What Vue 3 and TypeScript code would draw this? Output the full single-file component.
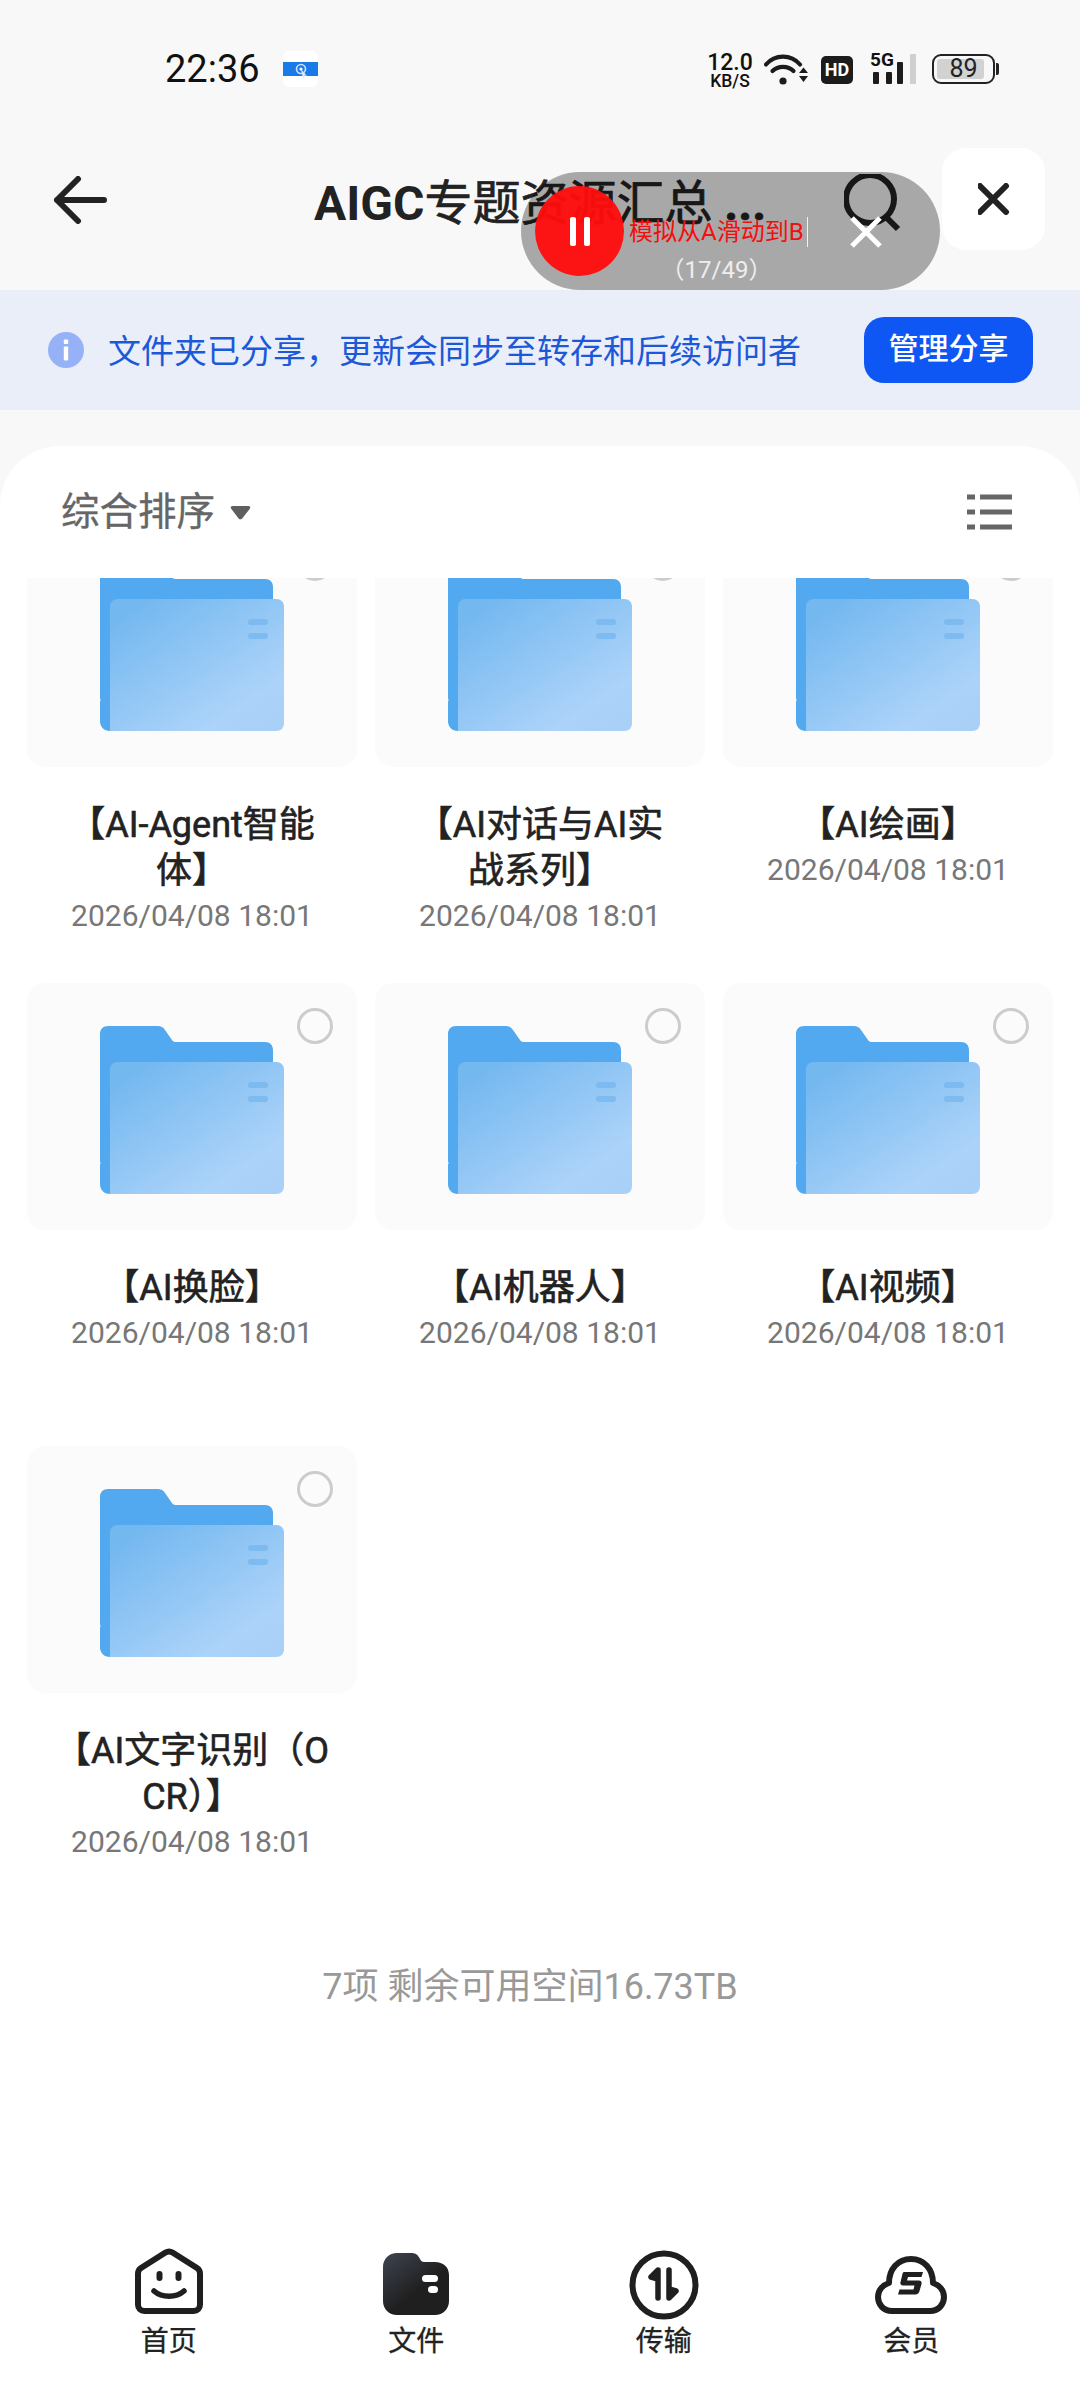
<script setup lang="ts">
interface Folder { name: string }
const folders: Folder[] = [
  { name: '【AI-Agent智能体】' },
  { name: '【AI对话与AI实战系列】' },
  { name: '【AI绘画】' },
  { name: '【AI换脸】' },
  { name: '【AI机器人】' },
  { name: '【AI视频】' },
  { name: '【AI文字识别（OCR）】' },
]
</script>

<template>
  <div class="page">
    <div class="status">
      <div class="status-left">
        <span class="time">22:36</span>
        <svg class="app-badge" width="35" height="36" viewBox="0 0 35 36">
          <rect width="35" height="36" rx="6" fill="#fff" />
          <rect y="11" width="35" height="14" fill="#1a7be8" />
          <circle cx="18" cy="18" r="4.5" fill="none" stroke="#cfe2fa" stroke-width="1.6" />
          <circle cx="18" cy="18" r="1.6" fill="#fff" />
          <path d="M18 18l6 7-2.6-.6L20 28z" fill="#dbe8fb" />
        </svg>
      </div>
      <div class="status-right">
        <div class="speed"><span class="speed-num">12.0</span><span class="speed-unit">KB/S</span></div>
        <svg class="wifi" width="44" height="32" viewBox="0 0 44 32">
          <path d="M2 11.5C11 1 27 1 36 11.5" fill="none" stroke="#1c1c1c" stroke-width="4.2" stroke-linecap="round" />
          <path d="M8.5 18C14 12.5 24 12.5 29.500 18" fill="none" stroke="#1c1c1c" stroke-width="4.2" stroke-linecap="round" />
          <circle cx="19" cy="28" r="3.6" fill="#1c1c1c" />
          <path d="M35 20h9l-4.5-5.5zM35 23h9l-4.5 6z" fill="#1c1c1c" />
        </svg>
        <span class="hd">HD</span>
        <div class="signal">
          <span class="five-g">5G</span>
          <svg class="bars" width="46" height="30" viewBox="0 0 46 30">
            <rect x="3" y="18" width="6" height="12" rx="1" fill="#1c1c1c" />
            <rect x="16" y="18" width="6" height="12" rx="1" fill="#1c1c1c" />
            <rect x="27" y="8" width="6" height="22" rx="1" fill="#1c1c1c" />
            <rect x="40" y="0" width="6" height="30" rx="1" fill="#cfcfcf" />
          </svg>
        </div>
        <div class="battery">
          <div class="battery-body"><span class="battery-fill"></span><span class="battery-num">89</span></div>
          <span class="battery-tip"></span>
        </div>
      </div>
    </div>

    <div class="header">
      <svg class="back" width="56" height="48" viewBox="0 0 56 48">
        <path d="M27 3L6 24l21 21M6 24h47" fill="none" stroke="#222" stroke-width="6" stroke-linecap="round" stroke-linejoin="round" />
      </svg>
      <div class="title"><span class="latin">AIGC</span>专题资源汇总 <b>...</b></div>
      <svg class="search" width="58" height="58" viewBox="0 0 58 58">
        <circle cx="26" cy="25" r="24" fill="none" stroke="#222" stroke-width="6" />
        <path d="M42 43l12 12" fill="none" stroke="#222" stroke-width="6" />
      </svg>
      <div class="close-box">
        <svg width="32" height="32" viewBox="0 0 32 32">
          <path d="M2 3l26 26M28 3L2 29" fill="none" stroke="#222" stroke-width="6" stroke-linecap="round" />
        </svg>
      </div>
    </div>

    <div class="banner">
      <svg class="info" width="36" height="36" viewBox="0 0 36 36">
        <circle cx="18" cy="18" r="18" fill="#96b1f6" />
        <rect x="15.8" y="7.5" width="4.4" height="4.6" rx="1" fill="#fff" />
        <rect x="15.8" y="14.5" width="4.4" height="14" rx="1" fill="#fff" />
      </svg>
      <span class="banner-text">文件夹已分享，更新会同步至转存和后续访问者</span>
      <span class="manage">管理分享</span>
    </div>

    <div class="sheet">
      <div class="sort">
        <span class="sort-label">综合排序</span>
        <svg class="caret" width="21" height="15" viewBox="0 0 21 15">
          <path d="M2.5 1h16c1.6 0 2.3 1.6 1.3 2.8l-7.6 9.6c-1 1.2-2.6 1.2-3.6 0L1.2 3.800C.2 2.600.9 1 2.500 1z" fill="#5f5f5f" />
        </svg>
        <svg class="list-icon" width="46" height="36" viewBox="0 0 46 36">
          <path d="M0 3h8M13 3h32M0 18h8M13 18h32M0 33h8M13 33h32" fill="none" stroke="#666" stroke-width="5" />
        </svg>
      </div>

      <div class="scroller">
        <div class="grid">
          <div v-for="folder in folders" :key="folder.name" class="cell">
            <div class="card">
              <svg class="folder" width="184" height="168" viewBox="0 0 184 168">
                <defs>
                  <linearGradient id="front" x1="0.1" y1="0.1" x2="0.85" y2="0.95">
                    <stop offset="0" stop-color="#74b8f0" />
                    <stop offset="0.85" stop-color="#acd3f9" />
                    <stop offset="1" stop-color="#a9d1f8" />
                  </linearGradient>
                </defs>
                <path d="M8 0h50c3 0 5 1 7 4l7 10c1 1.500 2 2 4 2h89c5 0 8 3 8 8v120H10c-6 0-10-4-10-10V8c0-5 3-8 8-8z" fill="#52a9ef" />
                <path d="M10 168c-6 0-10-4-10-10v-20h10v30z" fill="#52a9ef" />
                <path d="M18 36h158c5 0 8 3 8 8v116c0 5-3 8-8 8H10V44c0-5 3-8 8-8z" fill="url(#front)" />
                <rect x="148" y="56" width="20" height="6" rx="3" fill="#74b6ee" opacity="0.75" />
                <rect x="148" y="70" width="20" height="6" rx="3" fill="#74b6ee" opacity="0.75" />
              </svg>
              <span class="radio"></span>
            </div>
            <div class="name">{{ folder.name }}</div>
            <div class="date">2026/04/08 18:01</div>
          </div>
        </div>
        <div class="summary">7项 剩余可用空间16.73TB</div>
      </div>

      <nav class="nav">
        <div class="tab">
          <svg class="tab-icon" width="68" height="68" viewBox="0 0 68 68">
            <path d="M30.500 5.500L6 21c-2 1.300-3 3-3 5.500v31c0 4 2.500 6.500 6.500 6.500h49c4 0 6.500-2.500 6.500-6.500v-31c0-2.500-1-4.200-3-5.500L37.500 5.500c-2.300-1.400-4.700-1.400-7 0z" fill="none" stroke="#1f1f1f" stroke-width="6" stroke-linejoin="round" />
            <rect x="21.500" y="24" width="6" height="10" rx="3" fill="#1f1f1f" />
            <rect x="40.500" y="24" width="6" height="10" rx="3" fill="#1f1f1f" />
            <path d="M19 44c8 7 22 7 30 0" fill="none" stroke="#1f1f1f" stroke-width="5.500" stroke-linecap="round" />
          </svg>
          <span>首页</span>
        </div>
        <div class="tab">
          <svg class="tab-icon" width="66" height="68" viewBox="0 0 66 68">
            <defs>
              <linearGradient id="dark" x1="0.05" y1="0" x2="0.55" y2="0.6">
                <stop offset="0" stop-color="#3d444f" />
                <stop offset="1" stop-color="#1f1f1f" />
              </linearGradient>
            </defs>
            <path d="M14 6h14c5 0 7 2 9 6 1 2 2 3 4 3h11c8 0 14 5 14 13v26c0 8-6 14-14 14H14C6 68 0 62 0 54V20C0 12 6 6 14 6z" fill="url(#dark)" />
            <rect x="39" y="28" width="16" height="7" rx="3.500" fill="#fff" />
            <rect x="45" y="39" width="10" height="7" rx="3.500" fill="#fff" />
          </svg>
          <span>文件</span>
        </div>
        <div class="tab">
          <svg class="tab-icon transfer" width="70" height="70" viewBox="0 -4 70 70">
            <circle cx="35" cy="35" r="31.500" fill="none" stroke="#1f1f1f" stroke-width="6" />
            <path d="M29 48V20l-7 7 7 2z" fill="#1f1f1f" stroke="#1f1f1f" stroke-width="5.500" stroke-linecap="round" stroke-linejoin="round" />
            <path d="M40 20v28l7-7-7-2z" fill="#1f1f1f" stroke="#1f1f1f" stroke-width="5.500" stroke-linecap="round" stroke-linejoin="round" />
          </svg>
          <span>传输</span>
        </div>
        <div class="tab">
          <svg class="tab-icon" width="72" height="68" viewBox="0 0 72 68">
            <path d="M17 64C8 64 3 57 3 50c0-7 5-12 11-14 0-14 9-24 22-24s22 10 22 24c6 2 11 7 11 14 0 7-5 14-14 14z" fill="none" stroke="#1f1f1f" stroke-width="6" stroke-linejoin="round" />
            <path d="M29 25h19l-1.500 5H33l-1 3.500h12c2 0 3 1.500 2.500 3.500l-2 7c-.5 2-2 3.500-4 3.500H23l1.500-5h14l1-4H28c-2 0-3-1.500-2.500-3.500l1.500-6c.5-2.500 1-4 2-4z" fill="#1f1f1f" />
          </svg>
          <span>会员</span>
        </div>
      </nav>
    </div>

    <div class="overlay">
      <div class="stop"><i></i><i></i></div>
      <div class="overlay-text">
        <div class="step"><span>模拟从A滑动到B</span><u></u></div>
        <div class="count">（17/49）</div>
      </div>
      <svg class="overlay-x" width="32" height="32" viewBox="0 0 32 32">
        <path d="M2 2l28 28M30 2L2 30" fill="none" stroke="#fff" stroke-width="5" />
      </svg>
    </div>
  </div>
</template>

<style>
html, body { margin: 0; padding: 0; background: #f8f8f8; }
</style>

<style scoped>
.page {
  position: relative;
  width: 1080px;
  height: 2400px;
  overflow: hidden;
  display: flex;
  flex-direction: column;
  background: #f8f8f8;
  color: #222;
  font-family: Roboto, "Noto Sans CJK SC", "Noto Sans", sans-serif;
}
.status {
  height: 138px;
  flex: none;
  display: flex;
  align-items: center;
  justify-content: space-between;
  padding: 0 81px 0 165px;
  box-sizing: border-box;
}
.status-left { display: flex; align-items: center; gap: 23px; }
.time { font-size: 38px; line-height: 44px; color: #111; }
.app-badge { display: block; }
.status-right { display: flex; align-items: center; }
.speed { display: flex; flex-direction: column; align-items: center; width: 46px; margin-top: 4px; color: #111; }
.speed-num { font-size: 23px; line-height: 20px; font-weight: 500; }
.speed-unit { font-size: 17.500px; line-height: 16px; font-weight: 500; }
.wifi { margin-left: 11px; display: block; }
.hd {
  margin-left: 13px;
  width: 32px;
  height: 28px;
  margin-top: 2px;
  border-radius: 5px;
  background: #1c1c1c;
  color: #fff;
  font-size: 18px;
  line-height: 28px;
  font-weight: 700;
  text-align: center;
}
.signal { position: relative; width: 46px; height: 32px; margin-left: 17px; }
.five-g { position: absolute; left: 0; top: -2px; font-size: 19px; line-height: 17px; font-weight: 700; color: #111; }
.bars { display: block; position: absolute; left: 0; top: 1px; }
.battery { display: flex; align-items: center; margin-left: 16px; }
.battery-body {
  position: relative;
  width: 63px;
  height: 30px;
  box-sizing: border-box;
  border: 2.500px solid #222;
  border-radius: 9px;
  display: flex;
  align-items: center;
  justify-content: center;
}
.battery-fill { position: absolute; left: 3px; top: 3px; bottom: 3px; width: 47px; background: #d2d2d2; border-radius: 3px; }
.battery-num { position: relative; font-size: 25px; line-height: 26px; color: #222; }
.battery-tip { width: 3px; height: 12px; margin-left: 1px; background: #222; border-radius: 0 2px 2px 0; }

.header {
  height: 152px;
  flex: none;
  box-sizing: border-box;
  padding: 10px 35px 40px 51px;
  display: flex;
  align-items: center;
}
.back { flex: none; display: block; margin-top: 2px; }
.title {
  flex: 1;
  margin-left: 207px;
  padding-top: 10px;
  white-space: nowrap;
  font-size: 48px;
  line-height: 60px;
  font-weight: 400;
  -webkit-text-stroke: 0.7px #222;
  color: #222;
}
.title .latin { font-weight: 700; -webkit-text-stroke: 0; }
.title b { font-weight: 700; }
.search { flex: none; margin-right: 40px; display: block; margin-top: 8px; }
.close-box {
  flex: none;
  width: 103px;
  height: 102px;
  border-radius: 24px;
  background: #fff;
  display: flex;
  align-items: center;
  justify-content: center;
}

.banner {
  height: 120px;
  flex: none;
  box-sizing: border-box;
  padding: 0 47px 0 48px;
  display: flex;
  align-items: center;
  background: #eaeef8;
}
.info { flex: none; display: block; }
.banner-text { flex: 1; margin-left: 24px; padding-top: 4px; font-size: 33px; line-height: 44px; color: #1b59d8; white-space: nowrap; }
.manage {
  flex: none;
  width: 169px;
  height: 66px;
  border-radius: 20px;
  background: #0f57f5;
  color: #fff;
  font-size: 30px;
  line-height: 64px;
  font-weight: 500;
  text-align: center;
}

.sheet {
  flex: 1;
  min-height: 0;
  margin-top: 36px;
  background: #fff;
  border-radius: 60px 60px 0 0;
  display: flex;
  flex-direction: column;
}
.sort {
  height: 132px;
  flex: none;
  box-sizing: border-box;
  padding: 0 67px 0 61px;
  display: flex;
  align-items: center;
}
.sort-label { font-size: 38.500px; line-height: 50px; color: #666; -webkit-text-stroke: 0.3px #666; }
.caret { flex: none; margin-left: 15px; display: block; }
.list-icon { flex: none; margin-left: auto; display: block; }

.scroller { flex: 1; min-height: 0; overflow: hidden; }
.grid {
  margin-top: -58px;
  padding: 0 27px;
  display: grid;
  grid-template-columns: repeat(3, 330px);
  grid-auto-rows: 420px;
  column-gap: 18px;
  row-gap: 43px;
}
.cell { display: flex; flex-direction: column; align-items: center; }
.card {
  position: relative;
  width: 330px;
  height: 247px;
  flex: none;
  border-radius: 18px;
  background: #fbfbfb;
  margin-bottom: 35px;
}
.folder { position: absolute; left: 73px; top: 43px; display: block; }
.radio {
  position: absolute;
  left: 270px;
  top: 25px;
  width: 36px;
  height: 36px;
  box-sizing: border-box;
  border: 3.500px solid #ccc;
  border-radius: 50%;
}
.name {
  width: 282px;
  text-align: center;
  font-size: 36px;
  line-height: 46px;
  font-weight: 400;
  -webkit-text-stroke: 0.6px #222;
  color: #222;
  word-break: break-all;
}
.date { font-size: 30px; line-height: 44px; color: #777; white-space: nowrap; }
.summary {
  margin-top: 98px;
  padding-right: 20px;
  text-align: center;
  font-size: 36px;
  line-height: 46px;
  color: #999;
}

.nav {
  height: 170px;
  flex: none;
  box-sizing: border-box;
  padding: 16px 45px 0;
  display: grid;
  grid-template-columns: repeat(4, 1fr);
}
.tab { display: flex; flex-direction: column; align-items: center; font-size: 28px; line-height: 36px; color: #222; -webkit-text-stroke: 0.3px #222; }
.tab-icon { display: block; height: 70px; margin-bottom: 8px; }
.transfer { overflow: visible; }

.overlay {
  position: absolute;
  left: 521px;
  top: 172px;
  width: 419px;
  height: 118px;
  box-sizing: border-box;
  padding-left: 14px;
  border-radius: 59px;
  background: rgba(0, 0, 0, 0.32);
  display: flex;
  align-items: flex-start;
}
.stop {
  flex: none;
  width: 89px;
  height: 90px;
  margin-top: 14px;
  border-radius: 50%;
  background: rgba(255, 12, 12, 0.96);
  display: flex;
  align-items: center;
  justify-content: center;
  gap: 8px;
}
.stop i { width: 6px; height: 29px; border-radius: 2px; background: #fff; }
.overlay-text { flex: none; width: 185px; margin-left: 5px; padding-top: 42px; display: flex; flex-direction: column; align-items: center; }
.step { display: flex; align-items: center; height: 36px; width: 100%; font-size: 24px; line-height: 36px; color: #f40e0e; white-space: nowrap; }
.step u { width: 1px; height: 30px; margin-left: 3px; background: #f4f4f4; }
.count { font-size: 24px; line-height: 30px; margin-top: 5px; padding-right: 10px; color: #eee; white-space: nowrap; }
.overlay-x { flex: none; margin: 44px 0 0 36px; display: block; }
</style>
